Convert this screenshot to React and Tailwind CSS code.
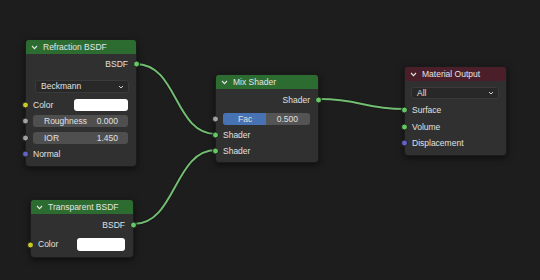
import React from 'react';

const SOCKET = {
  shader: 'bg-[#63c763]',
  color: 'bg-[#c7c729]',
  float: 'bg-[#a1a1a1]',
  vector: 'bg-[#6363c7]',
};

function Chevron() {
  return (
    <svg width="7" height="5" viewBox="0 0 7 5" className="shrink-0">
      <path d="M1 1 L3.5 3.6 L6 1" fill="none" stroke="#e6e6e6" strokeWidth="1.1" />
    </svg>
  );
}

function Socket({ type, side }) {
  return (
    <span
      className={`absolute top-1/2 -translate-y-1/2 w-[7px] h-[7px] rounded-full border border-[#1f1f1f] ${SOCKET[type]} ${side === 'left' ? '-left-[4px]' : '-right-[4px]'}`}
    />
  );
}

function Node({ left, top, width, title, header, children, bodyClass }) {
  return (
    <div
      className="absolute rounded-[4px] bg-[#303030] border border-[#1b1b1b] shadow-[0_2px_6px_rgba(0,0,0,0.55)]"
      style={{ left, top, width }}
    >
      <div className={`h-[14px] flex items-center gap-[5px] pl-[5px] rounded-t-[3px] ${header}`}>
        <Chevron />
        <span className="text-[8.5px] text-[#e4e4e4] leading-none">{title}</span>
      </div>
      <div className={bodyClass}>{children}</div>
    </div>
  );
}

function Output({ label, type, className = '' }) {
  return (
    <div className={`relative h-[14px] flex items-center justify-end pr-[8px] ${className}`}>
      <span className="text-[8.5px] text-[#e0e0e0]">{label}</span>
      <Socket type={type} side="right" />
    </div>
  );
}

function Input({ label, type, className = '', children }) {
  return (
    <div className={`relative h-[12px] flex items-center pl-[7px] pr-[8px] ${className}`}>
      <span className="text-[8.5px] text-[#e0e0e0] flex-1">{label}</span>
      {children}
      <Socket type={type} side="left" />
    </div>
  );
}

function Field({ label, value, type, className = '' }) {
  return (
    <div className={`relative h-[12px] pl-[7px] pr-[8px] ${className}`}>
      <div className="h-full rounded-[3px] bg-[#4f4f4f] flex items-center justify-between pl-[11px] pr-[10px] text-[8.5px] text-[#e0e0e0]">
        <span>{label}</span>
        <span>{value}</span>
      </div>
      <Socket type={type} side="left" />
    </div>
  );
}

function Dropdown({ label, className = '' }) {
  return (
    <div className={`px-[7px] ${className}`}>
      <div className="h-full rounded-[3px] bg-[#282828] border border-[#3a3a3a] flex items-center justify-between pl-[5px] pr-[4px] text-[8.5px] text-[#e0e0e0]">
        <span>{label}</span>
        <svg width="6" height="4" viewBox="0 0 6 4">
          <path d="M1 1 L3 3 L5 1" fill="none" stroke="#d0d0d0" strokeWidth="1" />
        </svg>
      </div>
    </div>
  );
}

function Wires() {
  return (
    <svg className="absolute inset-0" width="540" height="280">
      {[
        'M136 64 C178 64 174 134 216 134',
        'M134 224 C176 224 174 150 216 150',
        'M319 99 C362 99 362 109 405 109',
      ].map((d) => (
        <g key={d}>
          <path d={d} fill="none" stroke="#151515" strokeWidth="3.6" />
          <path d={d} fill="none" stroke="#72bd72" strokeWidth="2" />
        </g>
      ))}
    </svg>
  );
}

export default function App() {
  return (
    <div
      className="relative w-[540px] h-[280px] overflow-hidden bg-[#1d1d1d]"
      style={{ fontFamily: '"Liberation Sans", Arial, sans-serif' }}
    >
      <Wires />

      <Node left={25} top={39} width={112} title="Refraction BSDF" header="bg-[#2c6c30]" bodyClass="pt-[3px] pb-[6px] flex flex-col">
        <Output label="BSDF" type="shader" />
        <Dropdown label="Beckmann" className="h-[13px] mt-[9px] pl-[9px]" />
        <Input label="Color" type="color" className="mt-[6px]">
          <span className="w-[54px] h-[12px] rounded-[3px] bg-white" />
        </Input>
        <Field label="Roughness" value="0.000" type="float" className="mt-[4px]" />
        <Field label="IOR" value="1.450" type="float" className="mt-[5px]" />
        <Input label="Normal" type="vector" className="mt-[4px]" />
      </Node>

      <Node left={215} top={74} width={104} title="Mix Shader" header="bg-[#2c6c30]" bodyClass="pt-[4px] pb-[5px] flex flex-col">
        <Output label="Shader" type="shader" />
        <div className="relative h-[12px] mt-[6px] pl-[7px] pr-[8px]">
          <div className="h-full rounded-[3px] bg-[#545454] flex overflow-hidden text-[8.5px] text-[#e0e0e0]">
            <div className="w-[43px] bg-[#4772b3] flex items-center pl-[15px]">Fac</div>
            <div className="flex-1 flex items-center justify-end pr-[12px]">0.500</div>
          </div>
          <Socket type="float" side="left" />
        </div>
        <Input label="Shader" type="shader" className="mt-[4px]" />
        <Input label="Shader" type="shader" className="mt-[4px]" />
      </Node>

      <Node left={404} top={66} width={103} title="Material Output" header="bg-[#4b1f2a]" bodyClass="pt-[6px] pb-[6px] flex flex-col">
        <Dropdown label="All" className="h-[12px] pl-[6px]" />
        <Input label="Surface" type="shader" className="mt-[5px]" />
        <Input label="Volume" type="shader" className="mt-[5px]" />
        <Input label="Displacement" type="vector" className="mt-[4px]" />
      </Node>

      <Node left={30} top={199} width={104} title="Transparent BSDF" header="bg-[#2c6c30]" bodyClass="pt-[4px] pb-[6px] flex flex-col">
        <Output label="BSDF" type="shader" />
        <Input label="Color" type="color" className="mt-[6px] h-[13px]">
          <span className="w-[48px] h-[13px] rounded-[3px] bg-white" />
        </Input>
      </Node>
    </div>
  );
}
